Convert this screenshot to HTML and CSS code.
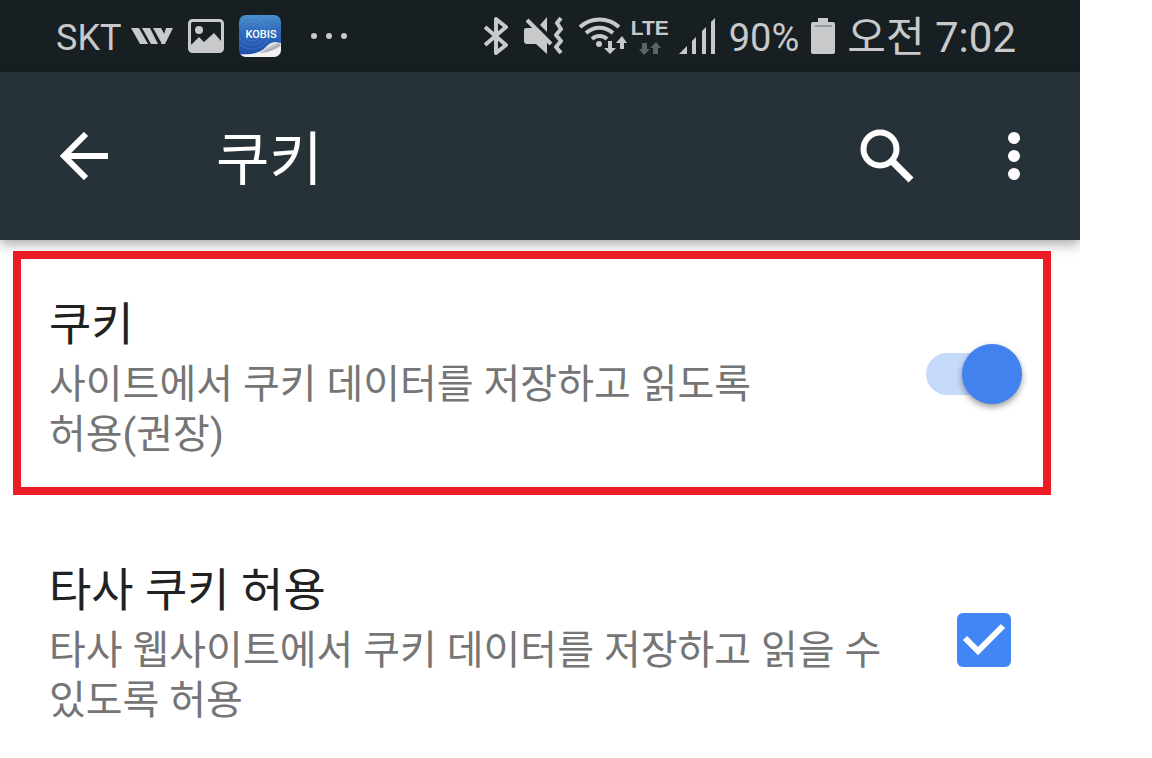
FILE: index.html
```
<!DOCTYPE html>
<html lang="ko">
<head>
    <meta charset="UTF-8">
    <meta name="viewport" content="width=device-width, initial-scale=1.0">
    <title>쿠키</title>
    <link rel="stylesheet" href="styles.css">
</head>
<body>
    <div class="phone">
        <div class="status-bar">
            <div class="status-left">
                <span class="carrier">SKT</span>
                <svg class="icon-w" width="42" height="16" viewBox="0 0 42 16" fill="#c7c9cb">
                    <path d="M0 0h8l9 16H9zM11 0h8l8 16h-7zM22 0h8l5 9-3 7h-1zM35 0h7l-8 16h-4z"/>
                </svg>
                <svg class="icon-image" width="36" height="34" viewBox="0 0 36 34">
                    <rect x="1.5" y="1.5" width="33" height="31" rx="3" fill="none" stroke="#c7c9cb" stroke-width="3"/>
                    <circle cx="11" cy="11" r="4" fill="#c7c9cb"/>
                    <path d="M4 25l7-7 5 5 10-9 8 9v9H2v-6z" fill="#c7c9cb"/>
                </svg>
                <svg class="icon-kobis" width="42" height="42" viewBox="0 0 42 42">
                    <defs>
                        <linearGradient id="blue" x1="0" y1="0" x2="0" y2="1">
                            <stop offset="0" stop-color="#4a8ecb"/>
                            <stop offset="0.4" stop-color="#2e68bb"/>
                            <stop offset="1" stop-color="#1e4faa"/>
                        </linearGradient>
                        <linearGradient id="curl" x1="0" y1="0" x2="1" y2="1">
                            <stop offset="0.3" stop-color="#ffffff"/>
                            <stop offset="0.6" stop-color="#a5a9af"/>
                            <stop offset="0.8" stop-color="#f0f0f0"/>
                        </linearGradient>
                        <clipPath id="tile"><rect width="42" height="42" rx="7"/></clipPath>
                    </defs>
                    <g clip-path="url(#tile)">
                        <rect width="42" height="42" fill="url(#blue)"/>
                        <g fill="none" stroke="#6ba5dc" stroke-opacity="0.3">
                            <circle cx="13" cy="16" r="6"/>
                            <circle cx="13" cy="16" r="10"/>
                            <circle cx="13" cy="16" r="14"/>
                            <circle cx="13" cy="16" r="18"/>
                        </g>
                        <path d="M0 39c12 1 21-1 26-6 4-4 8-6 16-5v14H0z" fill="#f2f2f3"/>
                        <path d="M20 38c6-2 7-10 16-11 3 0 5 1 6 4-6 4-13 7-22 7z" fill="url(#curl)"/>
                    </g>
                    <text class="kobis-label" x="22" y="23" text-anchor="middle">KOBIS</text>
                </svg>
                <svg class="icon-dots" width="38" height="6" viewBox="0 0 38 6" fill="#c7c9cb">
                    <circle cx="4" cy="3" r="3"/>
                    <circle cx="19" cy="3" r="3"/>
                    <circle cx="34" cy="3" r="3"/>
                </svg>
            </div>
            <div class="status-right">
                <svg width="25" height="38" viewBox="0 0 25 38" fill="none" stroke="#c7c9cb" stroke-width="4" stroke-linejoin="round">
                    <path d="M1 10l21 18-10 8V2l10 8L1 28"/>
                </svg>
                <svg class="icon-mute" width="40" height="38" viewBox="0 0 40 38">
                    <path d="M2 11h7l14 14v12L12 27H3q-3 0-3-3V13q0-2 2-2z" fill="#c7c9cb"/>
                    <path d="M16 8l7-8v15z" fill="#c7c9cb"/>
                    <path d="M3 3l24 24" stroke="#c7c9cb" stroke-width="4"/>
                    <path d="M37 1l-4 5 4 6-5 6 5 6-5 6 5 6" fill="none" stroke="#c7c9cb" stroke-width="4" stroke-linejoin="round"/>
                </svg>
                <svg class="icon-wifi" width="48" height="38" viewBox="0 0 48 38">
                    <g fill="none" stroke="#c7c9cb" stroke-width="4">
                        <path d="M1 10c11-10 28-10 39 0"/>
                        <path d="M7 16c8-7 19-7 27 0"/>
                        <path d="M13 22c4-4 11-4 15 0"/>
                    </g>
                    <circle cx="20" cy="27" r="3" fill="#c7c9cb"/>
                    <path d="M29 24h4v7h4l-6 6-6-6h4zM41 32v-6h-4l6-7 5 7h-3v6z" fill="#c7c9cb"/>
                </svg>
                <div class="lte">
                    <span>LTE</span>
                    <svg width="22" height="13" viewBox="0 0 22 13" fill="#5d6265">
                        <path d="M3 1h5v6h3l-6 6-5-6h3zM14 12V6h-3l6-6 5 6h-3v6z"/>
                    </svg>
                </div>
                <svg class="icon-signal" width="36" height="36" viewBox="0 0 36 36" fill="#c7c9cb">
                    <path d="M0 36l8-8v8zM13 23l4-4v17h-4zM23 13l4-4v27h-4zM32 4l4-4v36h-4z"/>
                </svg>
                <span class="battery-level">90%</span>
                <svg class="icon-battery" width="24" height="36" viewBox="0 0 24 36">
                    <path d="M7 0h10v4h5q2 0 2 2v28q0 2-2 2H2q-2 0-2-2V6q0-2 2-2h5z" fill="#c7c9cb"/>
                    <path d="M4 8h17" stroke="#6b7073"/>
                </svg>
                <span class="clock">오전 7:02</span>
            </div>
        </div>

        <header class="app-bar">
            <button class="icon-btn" type="button" aria-label="뒤로">
                <svg width="48" height="48" viewBox="0 0 48 48" fill="none" stroke="#fff" stroke-width="6">
                    <path d="M26 2L4 24l22 22M4 24h44"/>
                </svg>
            </button>
            <h1>쿠키</h1>
            <button class="icon-btn" type="button" aria-label="검색">
                <svg width="54" height="54" viewBox="0 0 54 54" fill="none" stroke="#fff">
                    <circle cx="20" cy="20" r="16.5" stroke-width="6"/>
                    <path d="M32 32l19 19" stroke-width="7"/>
                </svg>
            </button>
            <button class="icon-btn more-btn" type="button" aria-label="옵션 더보기">
                <svg width="12" height="48" viewBox="0 0 12 48" fill="#fff">
                    <circle cx="6" cy="6" r="6"/>
                    <circle cx="6" cy="24" r="6"/>
                    <circle cx="6" cy="42" r="6"/>
                </svg>
            </button>
        </header>

        <main>
            <label class="setting highlighted">
                <span class="setting-text">
                    <span class="setting-title">쿠키</span>
                    <span class="setting-desc">사이트에서 쿠키 데이터를 저장하고 읽도록 허용(권장)</span>
                </span>
                <input class="switch" type="checkbox" role="switch" checked>
            </label>
            <label class="setting">
                <span class="setting-text">
                    <span class="setting-title">타사 쿠키 허용</span>
                    <span class="setting-desc">타사 웹사이트에서 쿠키 데이터를 저장하고 읽을 수 있도록 허용</span>
                </span>
                <span class="check-wrap">
                    <input class="check" type="checkbox" checked>
                    <svg class="check-mark" width="54" height="54" viewBox="0 0 54 54" fill="none" stroke="#fff" stroke-width="6">
                        <path d="M8 25l13 13 25-25"/>
                    </svg>
                </span>
            </label>
        </main>
    </div>
</body>
</html>
```
FILE: styles.css
```
* {
    box-sizing: border-box;
}
body {
    margin: 0;
    background: #fff;
    font-family: Roboto, "Noto Sans CJK KR", sans-serif;
}
svg {
    display: block;
    flex-shrink: 0;
}
.phone {
    max-width: 1080px;
    overflow: hidden;
}

/* status bar */
.status-bar {
    display: flex;
    justify-content: space-between;
    height: 72px;
    padding: 0 64px 0 56px;
    background: #181f22;
    color: #c7c9cb;
    font-size: 42px;
    line-height: 72px;
    white-space: nowrap;
}
.status-left,
.status-right {
    display: flex;
    align-items: center;
}
.carrier,
.battery-level,
.clock {
    padding-top: 4px;
}
.carrier {
    font-size: 36px;
}
.icon-w {
    margin-left: 10px;
}
.icon-image {
    margin-left: 15px;
}
.icon-kobis {
    margin-left: 15px;
}
.icon-dots {
    margin-left: 29px;
}
.kobis-label {
    fill: #fff;
    font-size: 11px;
    font-weight: 500;
}
.icon-mute {
    margin-left: 15px;
}
.icon-wifi {
    margin-left: 15px;
}
.lte {
    display: flex;
    flex-direction: column;
    align-items: center;
    margin-left: 4px;
    font-family: "Liberation Sans", Arial, sans-serif;
    font-size: 21px;
    font-weight: bold;
    line-height: 20px;
}
.lte svg {
    margin-top: 4px;
}
.icon-signal {
    margin-left: 10px;
}
.battery-level {
    margin-left: 14px;
    font-size: 38px;
}
.icon-battery {
    margin: 0 12px;
}

/* app bar */
.app-bar {
    display: flex;
    align-items: center;
    height: 168px;
    padding: 0 60px;
    background: #273238;
    box-shadow: 0 4px 12px rgba(0, 0, 0, 0.35);
    color: #fff;
}
.app-bar h1 {
    flex: 1;
    margin: 0 0 0 108px;
    padding-top: 8px;
    font-size: 58px;
    font-weight: 400;
    line-height: 72px;
}
.icon-btn {
    padding: 0;
    border: none;
    background: none;
    cursor: pointer;
}
.more-btn {
    margin-left: 94px;
}

/* settings */
main {
    padding: 11px 29px 0 13px;
}
.setting {
    display: flex;
    align-items: center;
    justify-content: space-between;
    min-height: 244px;
    margin-bottom: 22px;
    padding: 2px 21px 0 28px;
    border: 8px solid transparent;
    cursor: pointer;
}
.setting.highlighted {
    border-color: #ed1c24;
}
.setting:last-child {
    margin-bottom: 0;
    padding-right: 32px;
}
.setting-text {
    max-width: 850px;
    padding-top: 6px;
}
.setting-title,
.setting-desc {
    display: block;
}
.setting-title {
    margin-bottom: 6px;
    color: #212121;
    font-size: 46px;
    line-height: 60px;
}
.setting-desc {
    color: #757575;
    font-size: 40px;
    line-height: 50px;
    word-break: keep-all;
}
.switch {
    appearance: none;
    position: relative;
    flex-shrink: 0;
    width: 96px;
    height: 42px;
    margin: 0 0 0 110px;
    border-radius: 21px;
    background: #c6dafc;
    cursor: pointer;
}
.switch::before {
    content: "";
    position: absolute;
    top: -9px;
    right: 0;
    width: 60px;
    height: 60px;
    border-radius: 50%;
    background: #4282ee;
    box-shadow: 0 3px 6px rgba(0, 0, 0, 0.4);
}
.switch:not(:checked)::before {
    right: 36px;
    background: #f1f1f1;
}
.check-wrap {
    position: relative;
    flex-shrink: 0;
}
.check {
    appearance: none;
    display: block;
    width: 54px;
    height: 54px;
    margin: 0;
    border-radius: 6px;
    background: #4285f4;
    cursor: pointer;
}
.check:not(:checked) {
    border: 6px solid #757575;
    background: #fff;
}
.check-mark {
    position: absolute;
    top: 0;
    left: 0;
    pointer-events: none;
}
```
